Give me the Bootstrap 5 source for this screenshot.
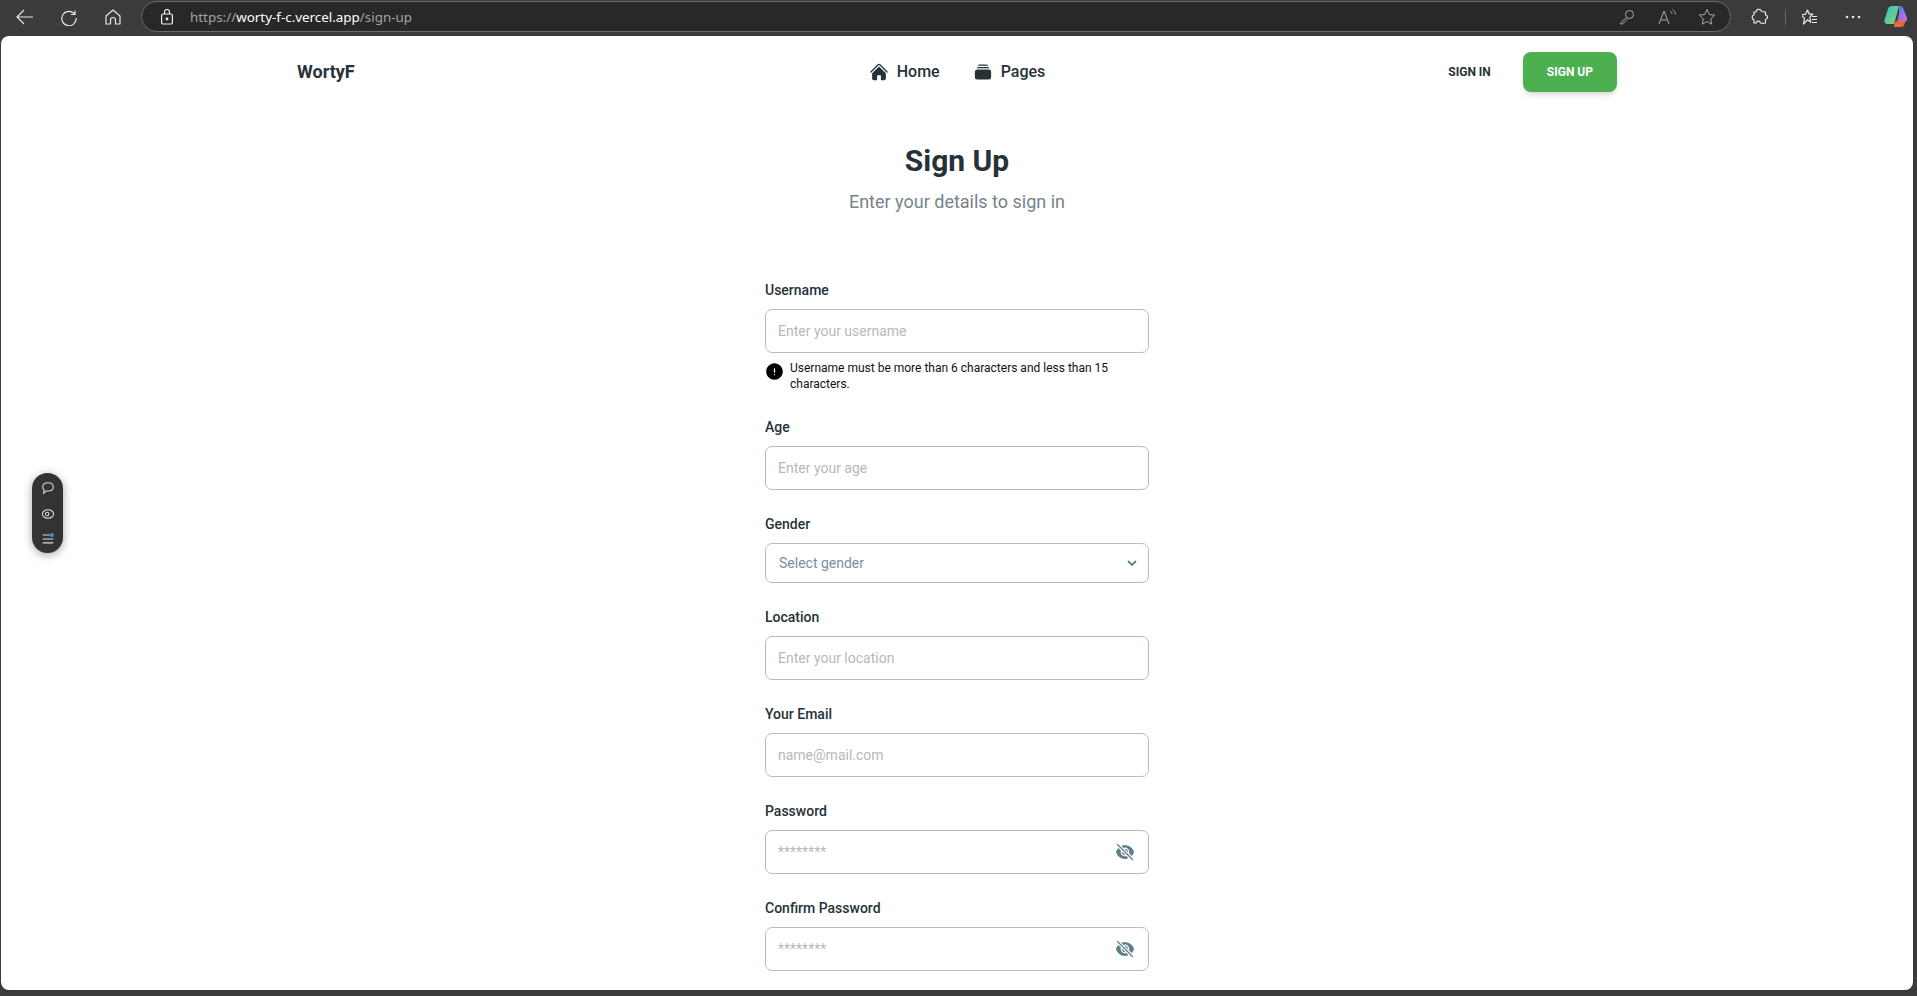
<!DOCTYPE html>
<html lang="en">
<head>
    <meta charset="UTF-8">
    <meta name="viewport" content="width=device-width, initial-scale=1.0">
    <title>Sign Up</title>
    <link href="https://cdn.jsdelivr.net/npm/bootstrap@5.3.3/dist/css/bootstrap.min.css" rel="stylesheet">
    <style>
        html, body {
            height: 100%;
        }
        body {
            background: #3b3b3b;
            font-family: Roboto, "Liberation Sans", sans-serif;
            color: #263238;
            overflow: hidden;
        }
        /* browser frame */
        .browser-bar {
            height: 36px;
            padding: 1px 0 4px 3px;
        }
        .tool-btn {
            width: 44px;
            height: 30px;
            color: #e8e8e8;
        }
        .address-bar {
            width: 1590px;
            height: 31px;
            margin-left: 6px;
            padding: 0 3px 0 18px;
            background: #282828;
            border: 1px solid #6a6a6a;
            border-radius: 16px;
        }
        .url-text {
            margin-left: 16px;
            font: 13.4px "Noto Sans", sans-serif;
            color: #a3a3a3;
        }
        .url-text b {
            font-weight: 400;
            color: #fff;
        }
        .addr-btn {
            width: 40px;
            color: #a8a8a8;
        }
        .right-tools {
            margin-left: 8px;
        }
        .right-btn {
            width: 42px;
            height: 30px;
            color: #e8e8e8;
        }
        .tool-divider {
            width: 1px;
            height: 16px;
            background: #666;
        }
        .page-frame {
            height: 954px;
            margin: 0 4px 0 1px;
            background: #fff;
            border-radius: 8px;
            overflow: hidden;
        }
        /* site nav */
        .site-nav {
            width: 1320px;
            height: 72px;
            margin: 0 auto;
            display: grid;
            grid-template-columns: 1fr auto 1fr;
            align-items: center;
        }
        .brand-name {
            display: block;
            margin-bottom: 2px;
            font-size: 18px;
            font-weight: 700;
            color: #263238;
        }
        .nav-item-link {
            font-size: 16px;
            font-weight: 500;
            color: #263238;
            text-decoration: none;
        }
        .nav-links {
            gap: 33px;
        }
        .btn-signin, .btn-signup {
            font-size: 12px;
            font-weight: 700;
            line-height: 16px;
            text-transform: uppercase;
            border-radius: 8px;
            border: 0;
            padding: 12px 24px;
        }
        .btn-signin {
            color: #263238;
            background: transparent;
        }
        .btn-signup {
            color: #fff;
            background: #4caf50;
            box-shadow: 0 4px 6px -1px rgba(0, 0, 0, .12), 0 2px 4px -2px rgba(0, 0, 0, .1);
        }
        /* form */
        .page-title {
            margin-top: 31px;
            font-size: 30px;
            font-weight: 700;
            line-height: 44px;
            color: #263238;
        }
        .page-sub {
            margin-top: 4px;
            font-size: 18px;
            line-height: 29px;
            color: #78828a;
        }
        .signup-form {
            width: 384px;
            margin: 64px auto 0;
        }
        .field-label {
            display: block;
            font-size: 14px;
            font-weight: 500;
            line-height: 21px;
            margin-bottom: 8px;
            color: #263238;
        }
        .field-wrap {
            margin-bottom: 24px;
        }
        .signup-form .form-control, .signup-form .form-select {
            font-size: 14px;
            color: #263238;
            border: 1px solid #b0bec5;
            border-radius: 7px;
            box-shadow: none;
        }
        .signup-form .form-control {
            height: 44px;
            padding: 0 12px;
        }
        .signup-form .form-control::placeholder {
            color: #b5b9bc;
        }
        .signup-form .form-select {
            height: 40px;
            padding: 0 12px 0 13px;
            color: #78909c;
            background-image: none;
        }
        .select-chevron, .eye-toggle {
            top: 50%;
            transform: translateY(-50%);
            color: #607d8b;
        }
        .select-chevron {
            right: 11px;
            width: 12px;
            height: 12px;
        }
        .eye-toggle {
            right: 14px;
            width: 20px;
            height: 20px;
        }
        .help-row {
            margin-top: 7px;
            margin-bottom: 25px;
            gap: 7px;
            font-size: 12px;
            line-height: 16px;
            color: #111;
        }
        .help-row svg {
            flex: none;
            width: 17px;
            height: 17px;
            margin: 3px 0 0 1px;
        }
        /* floating widget */
        .side-pill {
            position: absolute;
            left: 32px;
            top: 473px;
            width: 31px;
            height: 80px;
            padding: 8px 0;
            background: #333;
            border-radius: 16px;
            color: #ddd;
            box-shadow: 0 2px 10px rgba(0, 0, 0, .35);
        }
    </style>
</head>
<body>

    <div class="browser-bar d-flex align-items-center">
        <span class="tool-btn d-flex align-items-center justify-content-center">
            <svg width="18" height="18" viewBox="0 0 18 18" fill="none" stroke="currentColor" stroke-width="1.2"><path d="M1 9h16M8 2 1 9l7 7"/></svg>
        </span>
        <span class="tool-btn d-flex align-items-center justify-content-center">
            <svg width="18" height="18" viewBox="0 0 18 18" fill="none" stroke="currentColor" stroke-width="1.2"><path d="M15 2.5v4h-4M15 6.5A7.2 7.2 0 1 0 16.2 10"/></svg>
        </span>
        <span class="tool-btn d-flex align-items-center justify-content-center">
            <svg width="18" height="18" viewBox="0 0 18 18" fill="none" stroke="currentColor" stroke-width="1.2"><path d="M2 8 9 2l7 6v8h-4.500v-4a2.500 2.500 0 0 0-5 0v4H2z" stroke-linejoin="round"/></svg>
        </span>
        <div class="address-bar d-flex align-items-center">
            <svg width="14" height="16" viewBox="0 0 14 16" fill="none" stroke="#eee" stroke-width="1.200"><rect x="1.600" y="5" width="10.800" height="10" rx="1.500"/><path d="M4.500 5V3a2.500 2.500 0 0 1 5 0v2"/><circle cx="7" cy="10" r=".8" fill="#eee"/></svg>
            <span class="url-text">https://<b>worty-f-c.vercel.app</b>/sign-up</span>
            <div class="ms-auto d-flex align-items-center">
                <span class="addr-btn d-flex justify-content-center">
                    <svg width="16" height="16" viewBox="0 0 16 16" fill="none" stroke="currentColor"><circle cx="10.500" cy="5.500" r="4"/><path d="m7.500 8.500-6 5.500v1h2l5.500-5.500"/></svg>
                </span>
                <span class="addr-btn d-flex justify-content-center">
                    <svg width="18" height="16" viewBox="0 0 18 16" fill="none" stroke="currentColor"><path d="m1 15 5-13 5 13M3 11h6M12 2c1.500 1 2 2 2 3M14.500.5c2 1.500 3 3 3 5"/></svg>
                </span>
                <span class="addr-btn d-flex justify-content-center">
                    <svg width="18" height="18" viewBox="0 0 18 18" fill="none" stroke="currentColor" stroke-linejoin="round"><path d="m9 1.500 2.300 5 5.400.6-4 3.700 1.100 5.400L9 13.500l-4.800 2.700 1.100-5.400-4-3.700 5.400-.6z"/></svg>
                </span>
            </div>
        </div>
        <div class="right-tools d-flex align-items-center">
            <span class="right-btn d-flex align-items-center justify-content-center">
                <svg width="18" height="18" viewBox="0 0 18 18" fill="none" stroke="currentColor" stroke-width="1.200" stroke-linejoin="round"><path d="M5 4c.2-3 4.500-3.500 5.500-.8C11 4 13 3.500 14.500 4v3c2.500 0 2.800 4 0 4.500V15c-2 .5-3.500.5-5 0-.5-2.500-3.500-2.500-4.500 0H3v-3c-2.500-1-2.500-4.500 0-5V4z"/></svg>
            </span>
            <span class="tool-divider mx-1"></span>
            <span class="right-btn d-flex align-items-center justify-content-center">
                <svg width="18" height="18" viewBox="2 0 18 18" fill="none" stroke="currentColor" stroke-width="1.200" stroke-linejoin="round"><path d="m7.500 2 1.800 4.200h3.500l-3 3 1 5-3.300-2.400L3.500 16l1-5.500L1 7l4.500-.8zM12 8.500h5M12 11.500h5M12 14.500h5"/></svg>
            </span>
            <span class="right-btn d-flex align-items-center justify-content-center">
                <svg width="16" height="4" viewBox="0 0 16 4" fill="currentColor"><circle cx="2" cy="2" r="1.300"/><circle cx="8" cy="2" r="1.300"/><circle cx="14" cy="2" r="1.300"/></svg>
            </span>
            <span class="right-btn d-flex align-items-center justify-content-center">
                <svg width="23" height="22" viewBox="0 0 23 22">
                    <defs>
                        <linearGradient id="copA" x1="0" y1="0" x2="1" y2="1"><stop offset="0" stop-color="#2fc4e8"/><stop offset="1" stop-color="#8bd34a"/></linearGradient>
                        <linearGradient id="copB" x1="0" y1="0" x2="1" y2="1"><stop offset="0" stop-color="#3b7bf0"/><stop offset="1" stop-color="#e86ad8"/></linearGradient>
                    </defs>
                    <path d="M8 0h7l-3 11-2 7H4c-3 0-4-2-3.500-4L4 3c.5-2 2-3 4-3z" fill="url(#copA)"/>
                    <path d="M15 0h1c2 0 3 1 3.500 3L23 12c.5 2-1 4-3 4h-7l2-8z" fill="url(#copB)"/>
                    <path d="M10 21h7c2 0 3-1 3.500-3l1-3H13c-1.500 0-2 1-2.500 2z" fill="#f2643c"/>
                </svg>
            </span>
        </div>
    </div>

    <div class="page-frame">
        <nav class="site-nav">
            <div><a class="brand-name text-decoration-none" href="#">WortyF</a></div>
            <div class="nav-links d-flex align-items-center">
                <a class="nav-item-link d-flex align-items-center gap-2" href="#">
                    <svg width="20" height="20" viewBox="0 0 24 24" fill="currentColor"><path d="M11.470 3.840a.75.75 0 011.060 0l8.690 8.690a.75.75 0 101.060-1.060l-8.689-8.690a2.250 2.250 0 00-3.182 0l-8.690 8.690a.75.75 0 001.061 1.060l8.690-8.690z"/><path d="M12 5.432l8.159 8.159c.03.03.06.058.091.086v6.198c0 1.035-.84 1.875-1.875 1.875H15a.75.75 0 01-.75-.75v-4.500a.75.75 0 00-.75-.75h-3a.75.75 0 00-.75.75V21a.75.75 0 01-.75.75H5.625a1.875 1.875 0 01-1.875-1.875v-6.198a2.290 2.290 0 00.091-.086L12 5.432z"/></svg>
                    Home
                </a>
                <a class="nav-item-link d-flex align-items-center gap-2" href="#">
                    <svg width="20" height="20" viewBox="0 0 24 24" fill="currentColor"><path d="M5.566 4.657A4.505 4.505 0 016.750 4.500h10.500c.41 0 .806.055 1.183.157A3 3 0 0015.750 3h-7.500a3 3 0 00-2.684 1.657zM2.250 12a3 3 0 013-3h13.500a3 3 0 013 3v6a3 3 0 01-3 3H5.250a3 3 0 01-3-3v-6zM5.250 7.500c-.41 0-.806.055-1.184.157A3 3 0 016.750 6h10.500a3 3 0 012.683 1.657A4.505 4.505 0 0018.750 7.500H5.250z"/></svg>
                    Pages
                </a>
            </div>
            <div class="d-flex justify-content-end align-items-center gap-2">
                <button type="button" class="btn-signin">Sign In</button>
                <button type="button" class="btn-signup">Sign Up</button>
            </div>
        </nav>

        <div class="text-center">
            <h1 class="page-title mb-0">Sign Up</h1>
            <p class="page-sub mb-0">Enter your details to sign in</p>
        </div>

        <form class="signup-form">
            <div>
                <label class="field-label" for="username">Username</label>
                <input class="form-control" id="username" type="text" placeholder="Enter your username">
                <div class="help-row d-flex">
                    <svg viewBox="2 2 20 20" fill="#000"><path fill-rule="evenodd" d="M2.250 12c0-5.385 4.365-9.750 9.750-9.750s9.750 4.365 9.750 9.750-4.365 9.750-9.750 9.750S2.250 17.385 2.250 12zM12 8.250a.75.75 0 01.75.75v3.750a.75.75 0 01-1.500 0V9a.75.75 0 01.75-.75zm0 8.250a.75.75 0 100-1.500.75.75 0 000 1.500z"/></svg>
                    <span>Username must be more than 6 characters and less than 15 characters.</span>
                </div>
            </div>
            <div class="field-wrap">
                <label class="field-label" for="age">Age</label>
                <input class="form-control" id="age" type="text" placeholder="Enter your age">
            </div>
            <div class="field-wrap">
                <label class="field-label" for="gender">Gender</label>
                <div class="position-relative">
                    <select class="form-select" id="gender">
                        <option>Select gender</option>
                        <option>Male</option>
                        <option>Female</option>
                    </select>
                    <svg class="select-chevron position-absolute" viewBox="0 0 12 12" fill="none" stroke="currentColor" stroke-width="1.800"><path d="m2 4 4 4 4-4"/></svg>
                </div>
            </div>
            <div class="field-wrap">
                <label class="field-label" for="location">Location</label>
                <input class="form-control" id="location" type="text" placeholder="Enter your location">
            </div>
            <div class="field-wrap">
                <label class="field-label" for="email">Your Email</label>
                <input class="form-control" id="email" type="email" placeholder="name@mail.com">
            </div>
            <div class="field-wrap">
                <label class="field-label" for="password">Password</label>
                <div class="position-relative">
                    <input class="form-control" id="password" type="text" placeholder="********">
                    <svg class="eye-toggle position-absolute" viewBox="0 0 24 24" fill="currentColor"><path d="M3.530 2.470a.75.75 0 00-1.060 1.060l18 18a.75.75 0 101.060-1.060l-18-18zM22.676 12.553a11.249 11.249 0 01-2.631 4.310l-3.099-3.099a5.250 5.250 0 00-6.710-6.710L7.759 4.577a11.217 11.217 0 014.242-.827c4.970 0 9.185 3.223 10.675 7.690.12.362.12.752 0 1.113z"/><path d="M15.750 12c0 .18-.013.357-.037.53l-4.244-4.243A3.750 3.750 0 0115.750 12zM12.530 15.713l-4.243-4.244a3.750 3.750 0 004.243 4.243z"/><path d="M6.750 12c0-.619.107-1.213.304-1.764l-3.100-3.100a11.250 11.250 0 00-2.630 4.310c-.12.362-.12.752 0 1.114 1.490 4.467 5.705 7.690 10.675 7.690 1.500 0 2.933-.294 4.242-.827l-2.477-2.477A5.250 5.250 0 016.750 12z"/></svg>
                </div>
            </div>
            <div class="field-wrap">
                <label class="field-label" for="confirm">Confirm Password</label>
                <div class="position-relative">
                    <input class="form-control" id="confirm" type="text" placeholder="********">
                    <svg class="eye-toggle position-absolute" viewBox="0 0 24 24" fill="currentColor"><path d="M3.530 2.470a.75.75 0 00-1.060 1.060l18 18a.75.75 0 101.060-1.060l-18-18zM22.676 12.553a11.249 11.249 0 01-2.631 4.310l-3.099-3.099a5.250 5.250 0 00-6.710-6.710L7.759 4.577a11.217 11.217 0 014.242-.827c4.970 0 9.185 3.223 10.675 7.690.12.362.12.752 0 1.113z"/><path d="M15.750 12c0 .18-.013.357-.037.53l-4.244-4.243A3.750 3.750 0 0115.750 12zM12.530 15.713l-4.243-4.244a3.750 3.750 0 004.243 4.243z"/><path d="M6.750 12c0-.619.107-1.213.304-1.764l-3.100-3.100a11.250 11.250 0 00-2.630 4.310c-.12.362-.12.752 0 1.114 1.490 4.467 5.705 7.690 10.675 7.690 1.500 0 2.933-.294 4.242-.827l-2.477-2.477A5.250 5.250 0 016.750 12z"/></svg>
                </div>
            </div>
        </form>
    </div>

    <div class="side-pill d-flex flex-column align-items-center justify-content-between">
        <svg width="14" height="14" viewBox="0 0 16 16" fill="none" stroke="currentColor" stroke-width="1.200"><path d="M8 2c3.500 0 6 2 6 4.800S11.500 11.500 8 11.500H6L3 14l.6-3.500C2.500 9.500 2 8.200 2 6.800 2 4 4.500 2 8 2z"/></svg>
        <svg width="14" height="12" viewBox="0 0 16 14" fill="none" stroke="currentColor" stroke-width="1.200"><ellipse cx="8" cy="7" rx="6.500" ry="5"/><circle cx="7" cy="7" r="2"/></svg>
        <svg width="14" height="13" viewBox="0 0 16 14" fill="none" stroke="currentColor" stroke-width="1.200"><path d="M2 3h8M2 7.500h12M2 12h12"/><circle cx="12.500" cy="3" r="2.400" fill="#3b8cf0" stroke="none"/></svg>
    </div>

    <script src="https://cdn.jsdelivr.net/npm/bootstrap@5.3.3/dist/js/bootstrap.bundle.min.js"></script>
</body>
</html>
